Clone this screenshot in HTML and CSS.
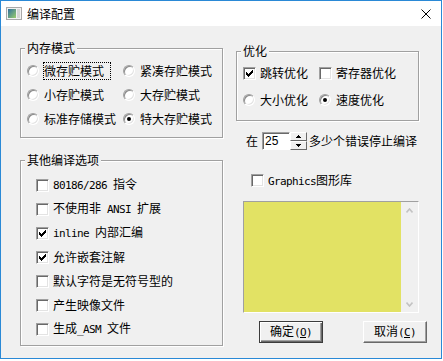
FILE: index.html
```html
<!DOCTYPE html>
<html lang="zh-CN">
<head>
<meta charset="utf-8">
<title>编译配置</title>
<link rel="stylesheet" href="styles.css">
</head>
<body>
<div class="window">
  <div class="titlebar">
    <svg class="app-icon" width="16" height="13" viewBox="0 0 16 13">
      <defs>
        <linearGradient id="ig" x1="0" y1="0" x2="1" y2="1">
          <stop offset="0" stop-color="#2f6f9f"/>
          <stop offset="1" stop-color="#9ccf6c"/>
        </linearGradient>
      </defs>
      <rect x="0.5" y="0.5" width="15" height="12" fill="#f2f2f2" stroke="#a9a9a9"/>
      <rect x="2" y="2" width="8" height="9" fill="url(#ig)"/>
      <rect x="11" y="2" width="3" height="9" fill="#d6d6d6"/>
    </svg>
    <span class="title">编译配置</span>
    <svg class="close" width="10" height="10" viewBox="0 0 10 10">
      <path d="M0.5 0.5 L9.5 9.5 M9.5 0.5 L0.5 9.5" stroke="#000" stroke-width="1" fill="none"/>
    </svg>
  </div>

  <div class="client">
    <div class="col-left">
      <div class="group g-mem">
        <div class="legend">内存模式</div>
        <div class="radio-grid">
          <label class="opt"><span class="radio"></span><span class="focus">微存贮模式</span></label>
          <label class="opt"><span class="radio"></span><span>紧凑存贮模式</span></label>
          <label class="opt"><span class="radio"></span><span>小存贮模式</span></label>
          <label class="opt"><span class="radio"></span><span>大存贮模式</span></label>
          <label class="opt"><span class="radio"></span><span>标准存储模式</span></label>
          <label class="opt"><span class="radio on"></span><span>特大存贮模式</span></label>
        </div>
      </div>

      <div class="group g-other">
        <div class="legend">其他编译选项</div>
        <div class="check-list">
          <label class="opt chk"><span class="check"></span><span><span class="en">80186/286 </span>指令</span></label>
          <label class="opt chk"><span class="check"></span><span>不使用非<span class="en"> ANSI </span>扩展</span></label>
          <label class="opt chk"><span class="check"><svg width="11" height="11" viewBox="0 0 11 11"><path d="M2 4h1v3h-1z M3 5h1v3h-1z M4 6h1v3h-1z M5 5h1v3h-1z M6 4h1v3h-1z M7 3h1v3h-1z M8 2h1v3h-1z" fill="#000"/></svg></span><span><span class="en">inline </span>内部汇编</span></label>
          <label class="opt chk"><span class="check"><svg width="11" height="11" viewBox="0 0 11 11"><path d="M2 4h1v3h-1z M3 5h1v3h-1z M4 6h1v3h-1z M5 5h1v3h-1z M6 4h1v3h-1z M7 3h1v3h-1z M8 2h1v3h-1z" fill="#000"/></svg></span><span>允许嵌套注解</span></label>
          <label class="opt chk"><span class="check"></span><span>默认字符是无符号型的</span></label>
          <label class="opt chk"><span class="check"></span><span>产生映像文件</span></label>
          <label class="opt chk"><span class="check"></span><span>生成<span class="en">_ASM </span>文件</span></label>
        </div>
      </div>
    </div>

    <div class="col-right">
      <div class="group g-opt">
        <div class="legend">优化</div>
        <div class="opt-grid">
          <label class="opt chk"><span class="check"><svg width="11" height="11" viewBox="0 0 11 11"><path d="M2 4h1v3h-1z M3 5h1v3h-1z M4 6h1v3h-1z M5 5h1v3h-1z M6 4h1v3h-1z M7 3h1v3h-1z M8 2h1v3h-1z" fill="#000"/></svg></span><span>跳转优化</span></label>
          <label class="opt chk"><span class="check"></span><span>寄存器优化</span></label>
          <label class="opt"><span class="radio"></span><span>大小优化</span></label>
          <label class="opt"><span class="radio on"></span><span>速度优化</span></label>
        </div>
      </div>

      <div class="err-row">
        <span class="err-pre">在</span>
        <span class="num"><span class="digits">25</span></span>
        <span class="spin">
          <span class="spin-btn"><svg width="5" height="3" viewBox="0 0 5 3"><path d="M2 0h1v1h1v1h1v1h-5v-1h1v-1h1z" fill="#000"/></svg></span>
          <span class="spin-btn"><svg width="5" height="3" viewBox="0 0 5 3"><path d="M0 0h5v1h-1v1h-1v1h-1v-1h-1v-1h-1z" fill="#000"/></svg></span>
        </span>
        <span class="err-post">多少个错误停止编译</span>
      </div>

      <label class="opt chk gfx"><span class="check"></span><span><span class="en">Graphics</span>图形库</span></label>

      <div class="preview">
        <div class="swatch"></div>
        <div class="vscroll">
          <svg width="7" height="5" viewBox="0 0 7 5"><path d="M0.5 4.5 L3.5 1 L6.5 4.5" stroke="#c3c3c3" stroke-width="1.6" fill="none"/></svg>
          <svg width="7" height="5" viewBox="0 0 7 5"><path d="M0.5 0.5 L3.5 4 L6.5 0.5" stroke="#c3c3c3" stroke-width="1.6" fill="none"/></svg>
        </div>
      </div>

      <div class="buttons">
        <button class="btn default" type="button">确定<span class="en">(<u>O</u>)</span></button>
        <button class="btn" type="button">取消<span class="en">(<u>C</u>)</span></button>
      </div>
    </div>
  </div>
</div>
</body>
</html>
```

FILE: styles.css
```css
* { box-sizing: border-box; }

body {
  margin: 0;
  background: #ffffff;
  font-family: "Noto Sans CJK SC", "Noto Sans", sans-serif;
  font-size: 12px;
  color: #000;
}

.en {
  font-family: "DejaVu Sans Mono", "Liberation Mono", monospace;
  font-size: 11px;
  letter-spacing: -0.62px;
  white-space: pre;
}

.window {
  width: 442px;
  height: 359px;
  border: 1px solid #2a89d6;
  background: #f0f0f0;
  display: flex;
  flex-direction: column;
}

.titlebar {
  flex: none;
  height: 25px;
  background: #ffffff;
  display: flex;
  align-items: center;
  padding: 0 10px 0 5px;
}

.app-icon { flex: none; display: block; }

.title {
  margin-left: 5px;
  line-height: 14px;
}

.close { margin-left: auto; display: block; }

.client {
  flex: 1;
  display: flex;
  padding: 22px 0 0 19px;
  gap: 13px;
}

.col-left {
  width: 203px;
  flex: none;
  display: flex;
  flex-direction: column;
}

.group {
  border: 1px solid #a0a0a0;
  box-shadow: 1px 1px 0 #ffffff, inset 1px 1px 0 #ffffff;
  box-sizing: content-box;
}

.legend {
  width: max-content;
  height: 14px;
  margin: -8px 0 0 4px;
  padding: 0 2px;
  background: #f0f0f0;
  line-height: 14px;
}

.g-mem { width: 201px; height: 88px; }

.radio-grid {
  display: grid;
  grid-template-columns: 96px 96px;
  grid-auto-rows: 24px;
  margin: 4px 0 0 6px;
}

.opt {
  display: flex;
  align-items: center;
  gap: 5px;
  line-height: 14px;
  white-space: nowrap;
}

.opt.chk { gap: 4px; }

.focus {
  padding-right: 6px;
  line-height: 16px;
  outline: 1px dotted #000;
}

.radio {
  flex: none;
  width: 12px;
  height: 12px;
  border-radius: 50%;
  background: #fff;
  border: 1px solid;
  border-color: #a0a0a0 #ffffff #ffffff #a0a0a0;
  box-shadow: inset 1px 1px 0 #8a8a8a, inset -1px -1px 0 #e3e3e3;
  display: flex;
  align-items: center;
  justify-content: center;
}

.radio.on::after {
  content: "";
  width: 4px;
  height: 4px;
  border-radius: 50%;
  background: #000;
}

.check {
  flex: none;
  width: 13px;
  height: 13px;
  background: #fff;
  border: 1px solid;
  border-color: #a0a0a0 #ffffff #ffffff #a0a0a0;
  box-shadow: inset 1px 1px 0 #696969, inset -1px -1px 0 #e3e3e3;
  display: flex;
}

.check svg { display: block; }

.g-other {
  width: 201px;
  height: 184px;
  margin-top: 22px;
}

.check-list {
  display: grid;
  grid-auto-rows: 24px;
  margin: 6px 0 0 15px;
}

.col-right {
  flex: 1;
  display: flex;
  flex-direction: column;
  align-items: flex-start;
}

.g-opt {
  width: 181px;
  height: 68px;
  margin-top: 3px;
}

.opt-grid {
  display: grid;
  grid-template-columns: 76px 76px;
  grid-template-rows: 24px 24px;
  row-gap: 3px;
  margin: 3px 0 0 6px;
}

.err-row {
  display: flex;
  align-items: center;
  height: 18px;
  margin: 11px 0 0 10px;
  line-height: 14px;
}

.err-pre { margin-right: 4px; }

.num {
  width: 28px;
  height: 18px;
  background: #fff;
  border: 1px solid;
  border-color: #a0a0a0 #ffffff #ffffff #a0a0a0;
  box-shadow: inset 1px 1px 0 #696969;
  padding: 0 0 0 2px;
  display: flex;
  align-items: center;
}

.digits {
  font-family: "Liberation Sans", sans-serif;
  font-size: 12px;
}

.spin {
  width: 17px;
  height: 18px;
  display: flex;
  flex-direction: column;
}

.spin-btn {
  flex: 1;
  background: #f0f0f0;
  border: 1px solid;
  border-color: #ffffff #696969 #696969 #ffffff;
  display: flex;
  align-items: center;
  justify-content: center;
}

.spin-btn svg { display: block; }

.err-post { margin-left: 2px; }

.gfx { margin: 24px 0 0 15px; height: 13px; }

.preview {
  width: 176px;
  height: 112px;
  margin: 14px 0 0 7px;
  border: 1px solid;
  border-color: #a0a0a0 #ffffff #ffffff #a0a0a0;
  display: flex;
}

.swatch {
  width: 157px;
  background: #e2e264;
}

.vscroll {
  flex: 1;
  background: #f0f0f0;
  display: flex;
  flex-direction: column;
  justify-content: space-between;
  align-items: center;
  padding: 6px 0 5px;
}

.vscroll svg { display: block; }

.buttons {
  display: flex;
  gap: 40px;
  margin: 8px 0 0 23px;
}

.btn {
  width: 64px;
  height: 22px;
  margin: 0;
  padding: 0;
  font-family: "Noto Sans CJK SC", sans-serif;
  font-size: 12px;
  line-height: 14px;
  color: #000;
  background: #f0f0f0;
  border: 1px solid;
  border-color: #ffffff #696969 #696969 #ffffff;
  box-shadow: inset -1px -1px 0 #a0a0a0;
}

.btn.default {
  border-color: #3c3c3c;
  box-shadow: inset 1px 1px 0 #ffffff, inset -1px -1px 0 #696969, inset -2px -2px 0 #a0a0a0;
}
```
